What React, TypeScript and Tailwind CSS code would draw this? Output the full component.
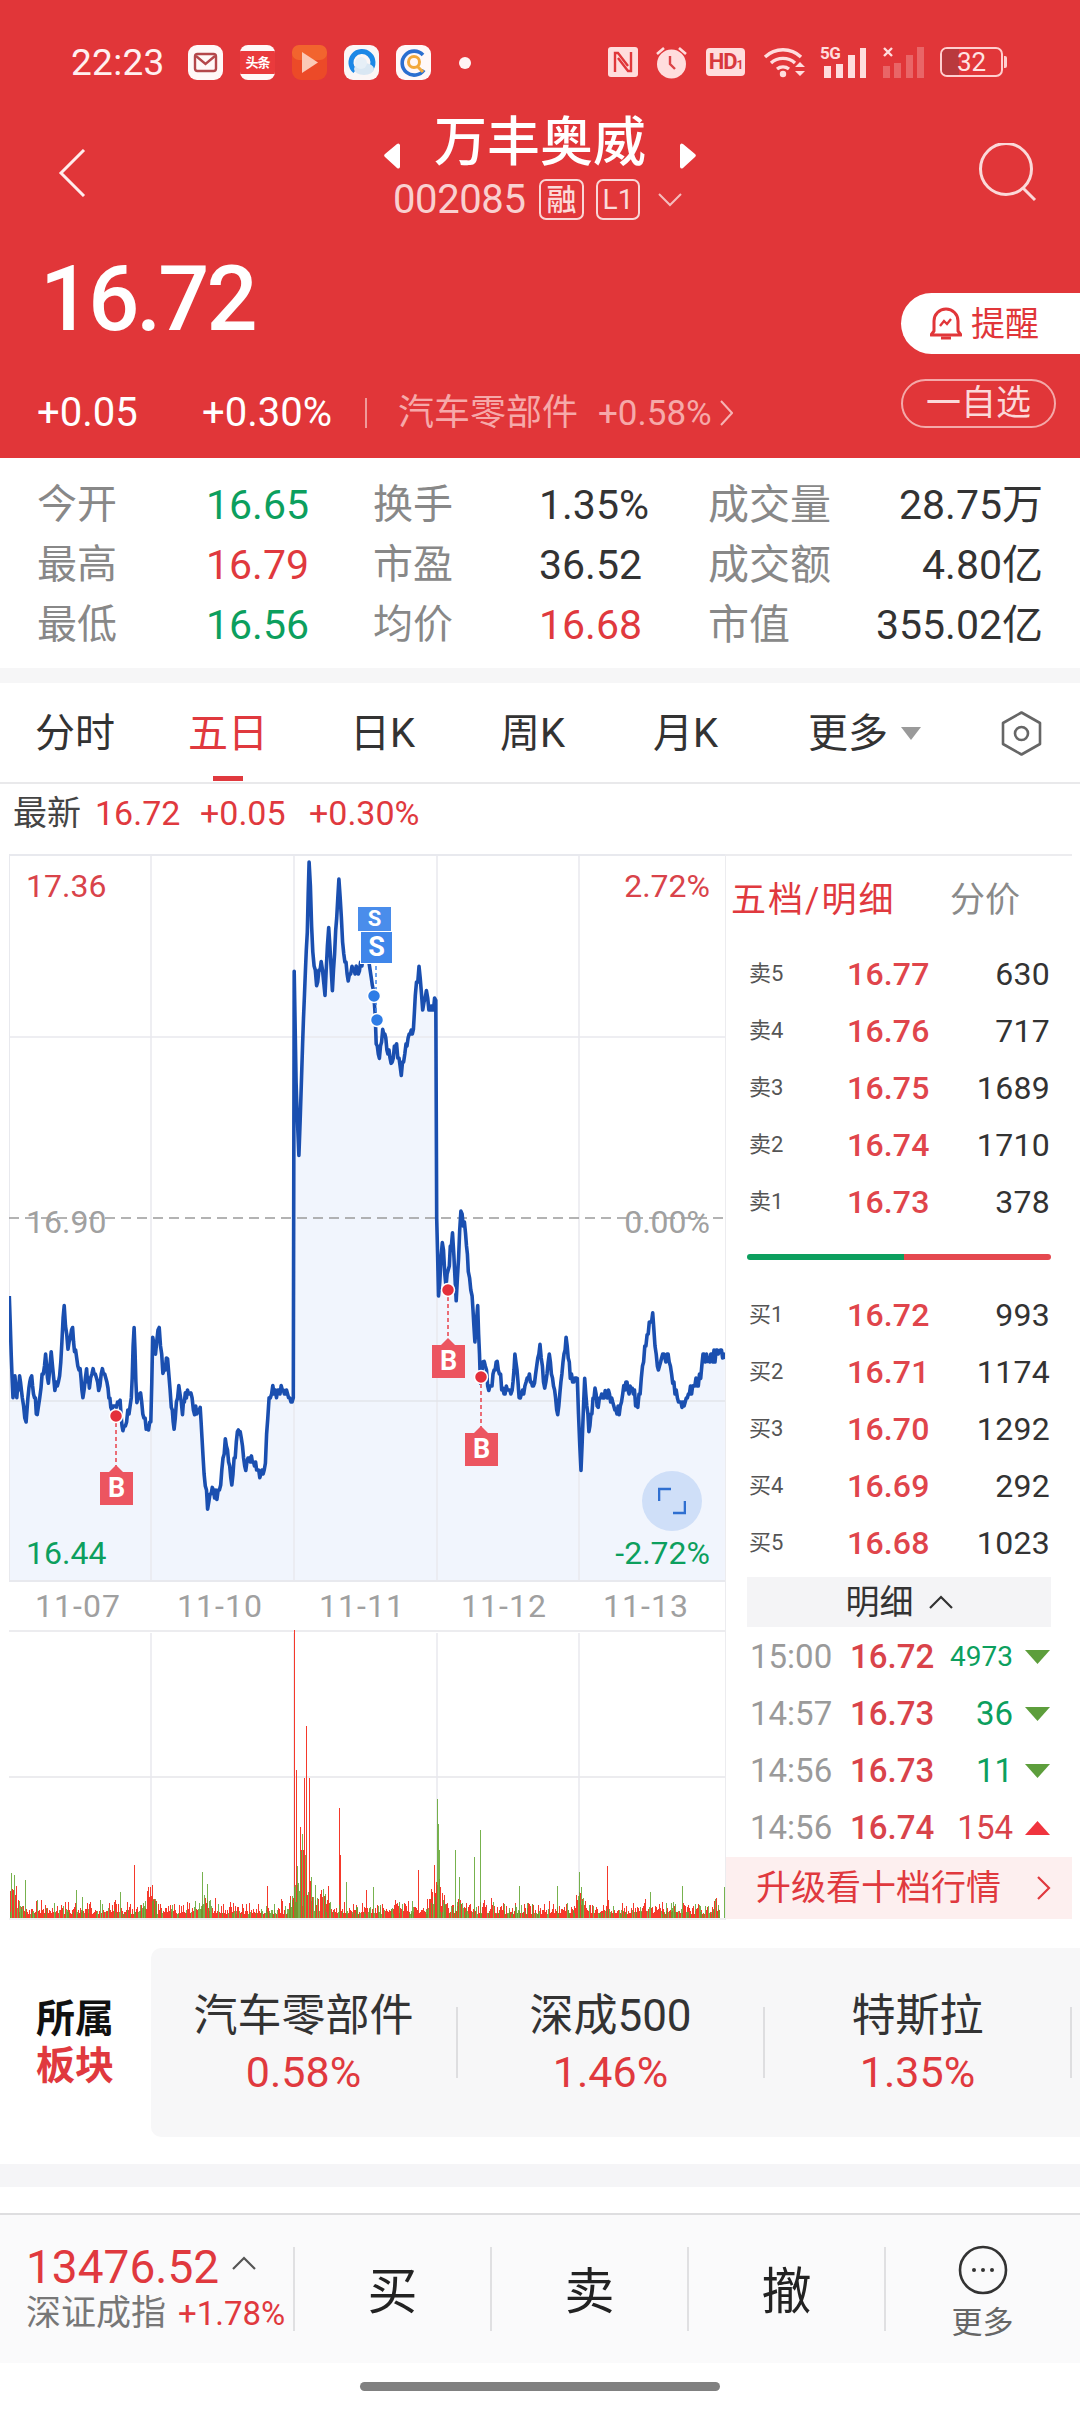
import React from 'react';

// seeded noise so the chart looks the same on every render
function makeRandom(seed: number) {
  let s = seed;
  return () => {
    s = (s * 1664525 + 1013904223) % 4294967296;
    return s / 4294967296;
  };
}

const CHART_W = 716;
const CHART_H = 728;
const VOL_H = 288;
const GRID_X = [142, 285, 428, 570];

// [x, y] turning points of the five day price line
const PRICE_POINTS: [number, number][] = [
  [20, 920], [24, 1040], [28, 1130], [32, 1085], [36, 1130], [42, 1085], [48, 1130], [56, 1180], [62, 1110], [68, 1085],
  [74, 1130], [80, 1165], [88, 1110], [98, 1040], [104, 1100], [110, 1035], [118, 1115], [128, 1085], [138, 940], [146, 1030],
  [156, 985], [160, 1035], [172, 1070], [178, 1130], [186, 1070], [192, 1110], [200, 1070], [212, 1115], [220, 1070], [232, 1110],
  [238, 1150], [250, 1150], [258, 1135], [264, 1198], [272, 1180], [282, 1130], [288, 985], [294, 1140], [302, 1120], [314, 1195],
  [324, 1180], [328, 1005], [334, 1040], [342, 985], [350, 1080], [360, 1050], [368, 1150], [374, 1195], [384, 1105], [392, 1165],
  [398, 1120], [410, 1120], [418, 1165], [430, 1150], [436, 1250], [446, 1360], [456, 1315], [466, 1340], [474, 1310], [484, 1215],
  [498, 1310], [510, 1200], [516, 1200], [528, 1280], [540, 1250], [558, 1295], [570, 1265], [578, 1130], [586, 1105], [594, 1130],
  [604, 1105], [620, 1130], [630, 1130], [632, 250], [636, 480], [642, 630], [650, 400], [656, 250], [660, 170], [664, 25],
  [672, 210], [680, 280], [690, 230], [698, 300], [706, 160], [714, 290], [728, 60], [736, 190], [748, 270], [756, 240],
  [772, 250], [780, 220], [790, 230], [800, 280], [806, 340], [808, 400], [815, 430], [822, 370], [840, 440], [852, 400],
  [862, 465], [872, 400], [888, 370], [892, 300], [900, 240], [908, 330], [916, 290], [924, 330], [936, 310], [938, 760],
  [942, 920], [950, 810], [958, 900], [972, 790], [980, 930], [990, 745], [1000, 790], [1006, 870], [1014, 920], [1020, 1015],
  [1026, 940], [1032, 1100], [1040, 1055], [1050, 1115], [1068, 1055], [1080, 1110], [1100, 1115], [1106, 1040], [1115, 1130], [1135, 1090],
  [1148, 1100], [1160, 1020], [1170, 1110], [1180, 1040], [1198, 1165], [1216, 1005], [1225, 1090], [1240, 1090], [1248, 1280], [1256, 1090],
  [1265, 1200], [1278, 1110], [1285, 1150], [1300, 1115], [1330, 1165], [1340, 1105], [1358, 1110], [1370, 1150], [1390, 1000], [1402, 955],
  [1412, 1065], [1435, 1040], [1445, 1100], [1465, 1150], [1490, 1105], [1505, 1090], [1510, 1040], [1520, 1055], [1545, 1035], [1557, 1050],
];

function buildPriceLine() {
  const rand = makeRandom(7);
  const pts: string[] = [];
  PRICE_POINTS.forEach(([zx, zy], i) => {
    const x = zx / 2.148 - 9;
    const y = zy / 2.063 - 4;
    if (i === 0) {
      pts.push(`${x.toFixed(1)},${y.toFixed(1)}`);
      return;
    }
    const prevX = PRICE_POINTS[i - 1][0] / 2.148 - 9;
    const prevY = PRICE_POINTS[i - 1][1] / 2.063 - 4;
    const n = Math.max(1, Math.round((x - prevX) / 1.1));
    for (let k = 1; k <= n; k++) {
      const t = k / n;
      const raw = prevY + (y - prevY) * t + (rand() - 0.5) * 11;
      const py = k < n ? Math.round(raw / 4) * 4 : y;
      pts.push(`${(prevX + (x - prevX) * t).toFixed(1)},${py.toFixed(1)}`);
    }
  });
  return pts;
}

// [x, top y, up?] for the tall single volume bars
const VOL_SPIKES: [number, number, boolean][] = [
  [25, 820, false], [30, 825, false], [55, 840, false], [80, 900, false], [98, 915, true], [118, 910, false], [140, 905, true],
  [164, 870, false], [177, 890, false], [235, 908, true], [247, 900, true], [259, 875, false], [289, 795, true], [327, 855, true],
  [435, 817, false], [446, 853, false], [463, 895, true], [505, 918, true], [575, 858, true], [604, 897, true], [633, 90, true],
  [636, 510, true], [645, 680, true], [654, 535, true], [658, 378, true], [665, 535, true], [670, 830, false], [678, 855, false],
  [706, 858, true], [729, 625, true], [731, 765, true], [744, 847, false], [787, 870, true], [803, 862, false], [857, 905, false], [899, 810, true],
  [927, 868, true], [933, 795, true], [940, 597, false], [941, 672, false], [945, 750, false], [978, 750, false], [987, 830, false], [1019, 772, false],
  [1032, 690, false], [1055, 895, true], [1116, 858, false], [1126, 912, true], [1197, 858, false], [1244, 817, false], [1250, 862, false],
  [1305, 798, true], [1338, 910, true], [1387, 897, true], [1397, 877, false], [1443, 908, false], [1466, 858, false], [1494, 912, false],
  [1540, 895, true], [1557, 860, false],
];

// wider humps of volume around the opening of each session, x / half width / height
const VOL_HUMPS: [number, number, number][] = [
  [24, 26, 34], [325, 28, 24], [440, 14, 16], [648, 30, 80], [690, 26, 26], [940, 24, 40], [985, 16, 16], [1245, 18, 22], [1540, 12, 14],
];

function buildVolumes() {
  const rand = makeRandom(31);
  let up = '';
  let down = '';
  for (let x = 1; x < 711; x += 0.62) {
    const zx = (x + 9) * 2.148;
    let hump = 0;
    VOL_HUMPS.forEach(([c, w, h]) => {
      const d = Math.abs(zx - c) / w;
      if (d < 1) hump = Math.max(hump, h * (1 - d));
    });
    const h = 4 + rand() * rand() * 15 + hump * rand();
    const seg = `M${x.toFixed(1)} ${VOL_H}V${(VOL_H - h).toFixed(1)}`;
    if (rand() < (hump > 0 ? 0.55 : 0.76)) up += seg;
    else down += seg;
  }
  VOL_SPIKES.forEach(([zx, zy, isUp]) => {
    const x = zx / 2.148 - 9;
    const seg = `M${x.toFixed(1)} ${VOL_H}V${((zy - 90) / 3).toFixed(1)}`;
    if (isUp) up += seg;
    else down += seg;
  });
  return { up, down };
}

function PriceChart() {
  const line = buildPriceLine();
  const area = `0,${CHART_H} ${line.join(' ')} ${CHART_W},${CHART_H}`;
  return (
    <svg width={CHART_W} height={CHART_H} className="block">
      <polygon points={area} fill="#F1F5FD" />
      {GRID_X.map((x) => (
        <line key={x} x1={x} x2={x} y1={0} y2={CHART_H} stroke="#E8E9EE" strokeWidth={1.5} />
      ))}
      <line x1={0} x2={0} y1={0} y2={CHART_H} stroke="#E8E9EE" strokeWidth={2} />
      <line x1={0} x2={CHART_W} y1={1} y2={1} stroke="#E8E9EE" strokeWidth={2} />
      <line x1={0} x2={CHART_W} y1={183} y2={183} stroke="#E8E9EE" strokeWidth={1.5} />
      <line x1={0} x2={CHART_W} y1={547} y2={547} stroke="#E2E4EA" strokeWidth={1.5} />
      <line x1={0} x2={CHART_W} y1={727} y2={727} stroke="#E8E9EE" strokeWidth={2} />
      <line x1={0} x2={CHART_W} y1={364} y2={364} stroke="#9A9A9A" strokeWidth={1.5} strokeDasharray="10 6" />
      <polyline points={line.join(' ')} fill="none" stroke="#1A4FB0" strokeWidth={3.6} strokeLinejoin="round" />
      {/* trade markers: stems and dots */}
      <line x1={107} x2={107} y1={562} y2={618} stroke="#E8404A" strokeWidth={1.5} strokeDasharray="4 3" />
      <line x1={439} x2={439} y1={436} y2={491} stroke="#E8404A" strokeWidth={1.5} strokeDasharray="4 3" />
      <line x1={472} x2={472} y1={523} y2={579} stroke="#E8404A" strokeWidth={1.5} strokeDasharray="4 3" />
      <line x1={367} x2={367} y1={112} y2={165} stroke="#3F86EA" strokeWidth={1.5} strokeDasharray="4 3" />
      <polygon points="100,618 107,611 114,618" fill="#EC5560" />
      <polygon points="432,491 439,484 446,491" fill="#EC5560" />
      <polygon points="465,579 472,572 479,579" fill="#EC5560" />
      <circle cx={107} cy={562} r={6.5} fill="#E4303B" stroke="#fff" strokeWidth={1.5} />
      <circle cx={439} cy={436} r={6.5} fill="#E4303B" stroke="#fff" strokeWidth={1.5} />
      <circle cx={472} cy={523} r={6.5} fill="#E4303B" stroke="#fff" strokeWidth={1.5} />
      <circle cx={365} cy={142} r={6.5} fill="#2F7DE6" stroke="#fff" strokeWidth={1.5} />
      <circle cx={368} cy={166} r={6.5} fill="#2F7DE6" stroke="#fff" strokeWidth={1.5} />
    </svg>
  );
}

function VolumeChart() {
  const { up, down } = buildVolumes();
  return (
    <svg width={CHART_W} height={VOL_H + 2} className="block">
      <line x1={0} x2={CHART_W} y1={1} y2={1} stroke="#ECECEF" strokeWidth={2} />
      <line x1={0} x2={CHART_W} y1={147} y2={147} stroke="#ECECEF" strokeWidth={2} />
      {GRID_X.map((x) => (
        <line key={x} x1={x} x2={x} y1={3} y2={VOL_H} stroke="#E8E9EE" strokeWidth={1.5} />
      ))}
      <path d={up} stroke="#F5392B" strokeWidth={1} fill="none" shapeRendering="crispEdges" />
      <path d={down} stroke="#5FA52F" strokeWidth={1} fill="none" shapeRendering="crispEdges" opacity={0.85} />
      <line x1={0} x2={CHART_W} y1={VOL_H + 1} y2={VOL_H + 1} stroke="#ECECEF" strokeWidth={1.5} />
    </svg>
  );
}

function MarkerTag({ letter, className }: { letter: string; className: string }) {
  return (
    <span className={`absolute flex items-center justify-center text-white font-bold leading-none ${className}`}>
      {letter}
    </span>
  );
}

function StatusIcons() {
  return (
    <div className="flex items-center ml-[25px] gap-[17px]">
      <svg width="35" height="35" viewBox="0 0 35 35">
        <rect width="35" height="35" rx="9" fill="#FFF8F8" />
        <rect x="7" y="9" width="21" height="17" rx="2.5" fill="none" stroke="#B4474B" strokeWidth="2.4" />
        <path d="M8 11l9.5 8 9.5-8" fill="none" stroke="#B4474B" strokeWidth="2.4" />
      </svg>
      <div className="w-[35px] h-[35px] rounded-[8px] bg-[#FFF8F8] flex items-center overflow-hidden">
        <div className="w-full h-[23px] bg-[#EA3A3C] text-white text-[13px] font-bold leading-none flex items-center justify-center whitespace-nowrap tracking-[-1px]">
          头条
        </div>
      </div>
      <svg width="35" height="35" viewBox="0 0 35 35">
        <rect width="35" height="35" rx="9" fill="#EC4A28" />
        <rect width="35" height="15" rx="7" fill="#F2642E" />
        <path d="M10 7l16 10.5L10 28z" fill="#FBC9B6" />
      </svg>
      <svg width="35" height="35" viewBox="0 0 35 35">
        <rect width="35" height="35" rx="9" fill="#FBF6F6" />
        <path d="M26 25a11 11 0 1 0-15 1" fill="none" stroke="#1C87E6" strokeWidth="5" />
        <ellipse cx="20" cy="24" rx="10" ry="6" fill="#D9E7F3" />
        <circle cx="17" cy="18" r="6" fill="#E6EFF7" />
      </svg>
      <svg width="35" height="35" viewBox="0 0 35 35">
        <rect width="35" height="35" rx="9" fill="#FFF8F8" />
        <path d="M27 10a12 12 0 1 0 1 15" fill="none" stroke="#2B6FD0" strokeWidth="3.6" />
        <circle cx="18" cy="17" r="5.5" fill="none" stroke="#F2A93C" strokeWidth="3" />
        <path d="M21 21l6 6" stroke="#F2A93C" strokeWidth="3" />
      </svg>
      <span className="w-[12px] h-[12px] rounded-full bg-[#FFF4F4] ml-[11px]" />
    </div>
  );
}

function SystemIcons() {
  return (
    <div className="flex items-center">
      <svg width="30" height="30" viewBox="0 0 30 30" className="mr-[17px]">
        <rect width="30" height="30" rx="3" fill="#FFDDDD" />
        <path d="M7 25V6h3l10 13M23 5v19h-3L10 11" fill="none" stroke="#E0373A" strokeWidth="2.4" />
      </svg>
      <svg width="33" height="34" viewBox="0 0 33 34" className="mr-[18px]">
        <circle cx="16.5" cy="19" r="14.5" fill="#FFDDDD" />
        <path d="M2 9l7-6M31 9l-7-6" stroke="#FFDDDD" strokeWidth="2.6" />
        <path d="M15 11v8l5 5" fill="none" stroke="#DA4346" strokeWidth="2.4" />
      </svg>
      <div className="w-[39px] h-[28px] rounded-[4px] bg-[#FFDDDD] text-[#D8383C] flex items-baseline justify-center font-bold text-[22px] leading-none pt-[3px] tracking-[-1px] mr-[18px]">
        HD<span className="text-[12px]">1</span>
      </div>
      <svg width="44" height="32" viewBox="0 0 44 32" className="mr-[13px]">
        <path d="M2 11a26 26 0 0 1 36 0M8 17a18 18 0 0 1 24 0M14 23a10 10 0 0 1 12 0" fill="none" stroke="#FFDDDD" strokeWidth="3.4" />
        <circle cx="20" cy="28" r="3.2" fill="#FFDDDD" />
        <path d="M32 21h10l-5-5zM32 25h10l-5 5z" fill="#FFDDDD" />
      </svg>
      <div className="relative w-[47px] h-[32px] mr-[15px]">
        <span className="absolute left-0 -top-[1px] text-[17px] font-bold leading-none text-[#FFDDDD] tracking-[-0.5px]">5G</span>
        <svg width="47" height="32" viewBox="0 0 47 32" className="block">
          <rect x="4" y="20" width="7" height="12" fill="#FFDDDD" />
          <rect x="16" y="18" width="7" height="14" fill="#FFDDDD" />
          <rect x="28" y="9" width="7" height="23" fill="#FFDDDD" />
          <rect x="40" y="2" width="6" height="30" fill="#FFDDDD" />
        </svg>
      </div>
      <svg width="43" height="32" viewBox="0 0 43 32" className="mr-[15px]">
        <path d="M2 2l8 8M10 2l-8 8" stroke="#FFDDDD" strokeWidth="2.4" />
        <g fill="#FFDDDD" fillOpacity="0.28">
          <rect x="1" y="20" width="7" height="12" />
          <rect x="12" y="17" width="7" height="15" />
          <rect x="24" y="9" width="7" height="23" />
          <rect x="35" y="1" width="7" height="31" />
        </g>
      </svg>
      <div className="flex items-center">
        <div className="relative w-[63px] h-[30px] rounded-[7px] border-2 border-[#FFCFCF] overflow-hidden flex items-center justify-center">
          <span className="absolute left-0 top-0 bottom-0 w-[17px] bg-[#B9393D]" />
          <span className="relative text-[26px] leading-none text-[#FFE3E3]">32</span>
        </div>
        <span className="w-[3px] h-[12px] rounded-r-[2px] bg-[#FFCFCF] ml-[1px]" />
      </div>
    </div>
  );
}

function StatCell({ value, color }: { value: string; color: string }) {
  return <span className={`${color} text-[41px] leading-none whitespace-nowrap`}>{value}</span>;
}

const STAT_ROWS = [
  { a: '今开', av: '16.65', ac: 'text-[#0C9F5E]', b: '换手', bv: '1.35%', bc: 'text-[#333333]', c: '成交量', cv: '28.75万' },
  { a: '最高', av: '16.79', ac: 'text-[#E0393E]', b: '市盈', bv: '36.52', bc: 'text-[#333333]', c: '成交额', cv: '4.80亿' },
  { a: '最低', av: '16.56', ac: 'text-[#0C9F5E]', b: '均价', bv: '16.68', bc: 'text-[#E0393E]', c: '市值', cv: '355.02亿' },
];

const TABS = [
  { label: '分时', width: 'w-[153px]' },
  { label: '五日', width: 'w-[162px]', active: true },
  { label: '日K', width: 'w-[150px]' },
  { label: '周K', width: 'w-[153px]' },
  { label: '月K', width: 'w-[155px]' },
];

const SELLS = [
  ['卖5', '16.77', '630'],
  ['卖4', '16.76', '717'],
  ['卖3', '16.75', '1689'],
  ['卖2', '16.74', '1710'],
  ['卖1', '16.73', '378'],
];

const BUYS = [
  ['买1', '16.72', '993'],
  ['买2', '16.71', '1174'],
  ['买3', '16.70', '1292'],
  ['买4', '16.69', '292'],
  ['买5', '16.68', '1023'],
];

const TRADES = [
  { time: '15:00', price: '16.72', vol: '4973', small: true, up: false },
  { time: '14:57', price: '16.73', vol: '36', up: false },
  { time: '14:56', price: '16.73', vol: '11', up: false },
  { time: '14:56', price: '16.74', vol: '154', up: true },
];

const SECTORS = [
  { name: '汽车零部件', pct: '0.58%' },
  { name: '深成500', pct: '1.46%' },
  { name: '特斯拉', pct: '1.35%' },
];

function QuoteRow({ row }: { row: string[] }) {
  return (
    <div className="h-[57px] flex items-center pt-[2px] pl-[23px] pr-[30px]">
      <span className="w-[98px] text-[22px] leading-none text-[#555555] whitespace-nowrap">{row[0]}</span>
      <span className="text-[32px] leading-none text-[#E0454B] font-medium tracking-[0.2px]">{row[1]}</span>
      <span className="flex-1 text-right text-[32px] leading-none text-[#333333] tracking-[0.3px]">{row[2]}</span>
    </div>
  );
}

export default function App() {
  return (
    <div className="w-[1080px] h-[2412px] overflow-hidden bg-white font-['Roboto','Noto_Sans_CJK_SC',sans-serif]">
      {/* red quote header */}
      <header className="h-[458px] bg-[#E13639] text-white">
        <div className="h-[100px] pt-[45px] pl-[71px] pr-[73px] flex items-start justify-between">
          <div className="flex items-center h-[35px]">
            <span className="text-[37px] leading-none text-[#FFF0F0] w-[92px] tracking-[0.3px]">22:23</span>
            <StatusIcons />
          </div>
          <SystemIcons />
        </div>

        <div className="flex h-[150px]">
          <div className="w-[340px] pl-[58px] pt-[49px]">
            <svg width="28" height="48" viewBox="0 0 28 48">
              <path d="M26 1L3 24l23 23" fill="none" stroke="#FFEDED" strokeWidth="3" />
            </svg>
          </div>
          <div className="w-[400px] pt-[13px] flex flex-col items-center">
            <div className="flex items-start h-[60px] gap-[32px]">
              <svg width="18" height="26" viewBox="0 0 18 26" className="mt-[30px]">
                <path d="M16 2v22a2 2 0 0 1-3 1L1 14a2 2 0 0 1 0-3L13 1a2 2 0 0 1 3 1z" fill="#fff" />
              </svg>
              <span className="text-[53px] leading-[60px] font-medium whitespace-nowrap">万丰奥威</span>
              <svg width="18" height="26" viewBox="0 0 18 26" className="mt-[30px]">
                <path d="M2 2v22a2 2 0 0 0 3 1L17 14a2 2 0 0 0 0-3L5 1a2 2 0 0 0-3 1z" fill="#fff" />
              </svg>
            </div>
            <div className="flex items-center mt-[6px] h-[41px] -ml-[5px]">
              <span className="text-[40px] leading-none text-[#F9D0D0] w-[132px] tracking-[-0.4px]">002085</span>
              <span className="ml-[14px] w-[45px] h-[41px] rounded-[7px] border-2 border-[#F9D6D6] flex items-center justify-center text-[30px] font-medium leading-none text-[#FBDADA]">融</span>
              <span className="ml-[12px] w-[44px] h-[41px] rounded-[7px] border-2 border-[#F9D6D6] flex items-center justify-center text-[28px] leading-none text-[#FBDADA]">L1</span>
              <svg width="24" height="14" viewBox="0 0 24 14" className="ml-[18px]">
                <path d="M1 1l11 11L23 1" fill="none" stroke="#F5BDBD" strokeWidth="2" />
              </svg>
            </div>
          </div>
          <div className="flex-1 flex justify-end pr-[43px] pt-[43px]">
            <svg width="59" height="59" viewBox="0 0 59 59">
              <circle cx="28" cy="26" r="25.5" fill="none" stroke="#FBD9D9" strokeWidth="3" />
              <path d="M45 45l12 12" stroke="#FBD9D9" strokeWidth="3" />
            </svg>
          </div>
        </div>

        <div className="flex h-[208px]">
          <div className="flex-1 pl-[37px] pt-[5px]">
            <div className="text-[90px] leading-[90px] font-medium ml-[3px] tracking-[-3px]">16.72</div>
            <div className="flex items-center h-[40px] mt-[48px] text-[40px] leading-none whitespace-nowrap">
              <span className="w-[165px]">+0.05</span>
              <span className="w-[163px]">+0.30%</span>
              <span className="w-[2px] h-[30px] bg-[#F09A9A]" />
              <span className="ml-[31px] text-[36px] text-[#F6A9A9]">汽车零部件</span>
              <span className="ml-[20px] text-[35px] text-[#F6A9A9]">+0.58%</span>
              <svg width="13" height="26" viewBox="0 0 13 26" className="ml-[8px]">
                <path d="M1 1l11 12L1 25" fill="none" stroke="#F6B4B4" strokeWidth="2" />
              </svg>
            </div>
          </div>
          <div className="w-[179px] pt-[43px]">
            <div className="h-[61px] rounded-l-[31px] bg-white flex items-center pl-[29px] text-[#E13639]">
              <svg width="32" height="34" viewBox="0 0 32 34" className="mr-[9px]">
                <path d="M4 24V14a12 12 0 0 1 24 0v10l3 4H1z" fill="none" stroke="#E13639" strokeWidth="3" strokeLinejoin="round" />
                <path d="M11 31h10" stroke="#E13639" strokeWidth="3" />
                <path d="M10 19l4-5 3 3 4-5" fill="none" stroke="#E13639" strokeWidth="2.4" />
              </svg>
              <span className="text-[34px] leading-none whitespace-nowrap">提醒</span>
            </div>
            <div className="mt-[25px] w-[155px] h-[49px] rounded-[25px] border-2 border-[#F4A9A9] flex items-center justify-center text-[35px] leading-none text-[#FBD9D9] whitespace-nowrap">
              一自选
            </div>
          </div>
        </div>
      </header>

      {/* day statistics */}
      <section className="h-[210px] pt-[17px] pl-[37px] pr-[37px]">
        {STAT_ROWS.map((r) => (
          <div key={r.a} className="flex items-center h-[60px] text-[40px] leading-none">
            <span className="w-[169px] text-[#888888]">{r.a}</span>
            <span className="w-[167px]"><StatCell value={r.av} color={r.ac} /></span>
            <span className="w-[166px] text-[#888888]">{r.b}</span>
            <span className="w-[169px]"><StatCell value={r.bv} color={r.bc} /></span>
            <span className="w-[125px] text-[#888888] text-[41px]">{r.c}</span>
            <span className="flex-1 text-right"><StatCell value={r.cv} color="text-[#333333]" /></span>
          </div>
        ))}
      </section>
      <div className="h-[15px] bg-[#F6F6F7]" />

      {/* period tabs */}
      <nav className="h-[101px] pl-[35px] flex items-center border-b-2 border-[#E9E9EB] pt-[2px]">
        {TABS.map((t) => (
          <div key={t.label} className={`${t.width} relative text-[40px] leading-none ${t.active ? 'text-[#E0393E]' : 'text-[#333333]'}`}>
            {t.label}
            {t.active && <span className="absolute left-[25px] top-[62px] w-[30px] h-[5px] bg-[#E0393E]" />}
          </div>
        ))}
        <div className="w-[193px] flex items-center text-[40px] leading-none text-[#333333]">
          更多
          <svg width="20" height="13" viewBox="0 0 20 13" className="ml-[13px]">
            <path d="M0 0h20L10 13z" fill="#9A9A9A" />
          </svg>
        </div>
        <svg width="41" height="45" viewBox="0 0 41 45">
          <path d="M20.5 1.5l18.5 10.5v21L20.5 43.5 2 33V12z" fill="none" stroke="#666666" strokeWidth="2.6" strokeLinejoin="round" />
          <circle cx="20.5" cy="22.5" r="6.5" fill="none" stroke="#666666" strokeWidth="2.6" />
        </svg>
      </nav>

      <div className="h-[70px] pl-[13px] pb-[12px] flex items-center text-[34px] leading-none text-[#E0393E] whitespace-nowrap">
        <span className="w-[82px] text-[#444444]">最新</span>
        <span className="w-[105px]">16.72</span>
        <span className="w-[109px]">+0.05</span>
        <span>+0.30%</span>
      </div>

      {/* chart column and order book column */}
      <div className="flex h-[1066px]">
        <div className="w-[725px] pl-[9px]">
          <div className="relative w-[716px] h-[728px]">
            <PriceChart />
            <span className="absolute left-[17px] top-[16px] text-[32px] leading-none text-[#D9434A]">17.36</span>
            <span className="absolute right-[15px] top-[16px] text-[32px] leading-none text-[#D9434A]">2.72%</span>
            <span className="absolute left-[17px] top-[352px] text-[32px] leading-none text-[#A0A0A0]">16.90</span>
            <span className="absolute right-[15px] top-[352px] text-[32px] leading-none text-[#A0A0A0]">0.00%</span>
            <span className="absolute left-[17px] top-[683px] text-[32px] leading-none text-[#0C9F5E]">16.44</span>
            <span className="absolute right-[15px] top-[683px] text-[32px] leading-none text-[#0C9F5E]">-2.72%</span>

            <MarkerTag letter="S" className="left-[349px] top-[53px] w-[33px] h-[24px] bg-[#4A8DEB] text-[22px]" />
            <MarkerTag letter="S" className="left-[351px] top-[77px] w-[33px] h-[33px] text-[27px] bg-[#3F86EA] border border-white" />
            <MarkerTag letter="B" className="left-[91px] top-[618px] w-[33px] h-[33px] text-[27px] bg-[#EC5560]" />
            <MarkerTag letter="B" className="left-[423px] top-[491px] w-[33px] h-[33px] text-[27px] bg-[#EC5560]" />
            <MarkerTag letter="B" className="left-[456px] top-[579px] w-[33px] h-[33px] text-[27px] bg-[#EC5560]" />

            <div className="absolute left-[633px] top-[617px] w-[60px] h-[60px] rounded-full bg-[#CFDFF8] flex items-center justify-center">
              <svg width="28" height="28" viewBox="0 0 28 28">
                <path d="M1 14V2h12M27 14v12H15" fill="none" stroke="#2F6FD0" strokeWidth="2.6" />
              </svg>
            </div>
          </div>

          <div className="h-[48px] w-[716px] -ml-[2px] flex items-center text-[32px] leading-none text-[#A0A0A0] tracking-[1px]">
            {['11-07', '11-10', '11-11', '11-12', '11-13'].map((d) => (
              <span key={d} className="w-[142px] text-center">{d}</span>
            ))}
          </div>

          <VolumeChart />
        </div>

        <aside className="w-[355px] border-l border-[#ECECEF]">
          <div className="h-[90px] border-t-2 border-[#ECECEF] mr-[8px] flex items-center pl-[5px] text-[35px] leading-none whitespace-nowrap">
            <span className="w-[219px] text-[#E0393E] tracking-[2px]">五档/明细</span>
            <span className="text-[#8A8A8A]">分价</span>
          </div>
          {SELLS.map((r) => (
            <QuoteRow key={r[0]} row={r} />
          ))}
          <div className="h-[56px] flex items-center pl-[21px] pr-[29px]">
            <div className="flex-1 h-[6px] rounded-full overflow-hidden flex">
              <span className="w-[157px] bg-[#0C9F5E]" />
              <span className="flex-1 bg-[#E5484F]" />
            </div>
          </div>
          {BUYS.map((r) => (
            <QuoteRow key={r[0]} row={r} />
          ))}

          <div className="mt-[7px] ml-[21px] mr-[29px] h-[50px] bg-[#F4F4F6] flex items-center justify-center text-[34px] leading-none text-[#333333] whitespace-nowrap">
            明细
            <svg width="24" height="14" viewBox="0 0 24 14" className="ml-[15px]">
              <path d="M1 13L12 2l11 11" fill="none" stroke="#333333" strokeWidth="2.2" />
            </svg>
          </div>

          {TRADES.map((t, i) => (
            <div key={i} className="h-[57px] flex items-center pt-[2px] pl-[24px] pr-[30px] leading-none whitespace-nowrap">
              <span className="w-[100px] text-[33px] text-[#9A9A9A]">{t.time}</span>
              <span className="text-[33px] text-[#D9434A] font-medium">{t.price}</span>
              <span className={`flex-1 text-right ${t.small ? 'text-[28px]' : 'text-[33px]'} ${t.up ? 'text-[#D9434A]' : 'text-[#0C9F5E]'}`}>
                {t.vol}
              </span>
              <svg width="25" height="14" viewBox="0 0 25 14" className="ml-[12px]">
                {t.up ? <path d="M12.5 0L25 14H0z" fill="#F0343E" /> : <path d="M0 0h25L12.5 14z" fill="#5D9E3C" />}
              </svg>
            </div>
          ))}

          <div className="mt-[2px] mr-[8px] h-[62px] bg-[#FDEFEF] flex items-center pl-[30px] text-[35px] leading-none text-[#E0393E] whitespace-nowrap">
            <span className="w-[280px]">升级看十档行情</span>
            <svg width="15" height="24" viewBox="0 0 15 24">
              <path d="M2 1l11 11L2 23" fill="none" stroke="#E0393E" strokeWidth="2.2" />
            </svg>
          </div>
        </aside>
      </div>

      {/* related sectors */}
      <section className="h-[244px] pt-[28px] flex items-start">
        <div className="w-[151px] h-[189px] pl-[36px] pt-[48px] text-[39px] leading-[47px] font-bold whitespace-nowrap">
          <div className="text-[#111111]">所属</div>
          <div className="text-[#E0393E]">板块</div>
        </div>
        <div className="flex-1 h-[189px] rounded-l-[10px] bg-[#F7F7F8] flex items-start pt-[59px]">
          {SECTORS.map((s) => (
            <div key={s.name} className="w-[307px] h-[71px] shrink-0 border-r-2 border-[#DEDEE0] flex flex-col items-center whitespace-nowrap leading-none">
              <span className="text-[44px] text-[#333333] -mt-[13px] h-[50px] flex items-center">{s.name}</span>
              <span className="text-[43px] text-[#E0393E] mt-[13px]">{s.pct}</span>
            </div>
          ))}
        </div>
      </section>
      <div className="h-[23px] bg-[#F5F5F7]" />
      <div className="h-[26px]" />

      {/* bottom trade bar */}
      <footer className="h-[150px] bg-[#FAFAFB] border-t-2 border-[#DEDEE0] flex items-start pt-[32px] whitespace-nowrap leading-none">
        <div className="w-[295px] h-[84px] pl-[26px] border-r-2 border-[#E0E0E2]">
          <div className="flex items-center h-[40px]">
            <span className="text-[46px] text-[#E0393E]">13476.52</span>
            <svg width="24" height="14" viewBox="0 0 24 14" className="ml-[13px] -mt-[8px]">
              <path d="M1 13L12 2l11 11" fill="none" stroke="#555555" strokeWidth="2.2" />
            </svg>
          </div>
          <div className="flex items-center mt-[8px] h-[36px]">
            <span className="text-[35px] text-[#777777]">深证成指</span>
            <span className="ml-[12px] text-[33px] text-[#E0393E]">+1.78%</span>
          </div>
        </div>
        {['买', '卖', '撤'].map((a) => (
          <div key={a} className="w-[197px] h-[84px] pt-[5px] border-r-2 border-[#E0E0E2] flex items-center justify-center text-[50px] text-[#222222]">
            {a}
          </div>
        ))}
        <div className="flex-1 flex flex-col items-center -mt-[2px] pr-[1px]">
          <svg width="50" height="50" viewBox="0 0 50 50">
            <circle cx="25" cy="25" r="23" fill="none" stroke="#333333" strokeWidth="2.6" />
            <circle cx="16" cy="25" r="2" fill="#333333" />
            <circle cx="25" cy="25" r="2" fill="#333333" />
            <circle cx="34" cy="25" r="2" fill="#333333" />
          </svg>
          <span className="text-[31px] text-[#666666] mt-[12px]">更多</span>
        </div>
      </footer>
      <div className="flex justify-center pt-[19px]">
        <span className="w-[360px] h-[9px] rounded-full bg-[#808080]" />
      </div>
    </div>
  );
}
